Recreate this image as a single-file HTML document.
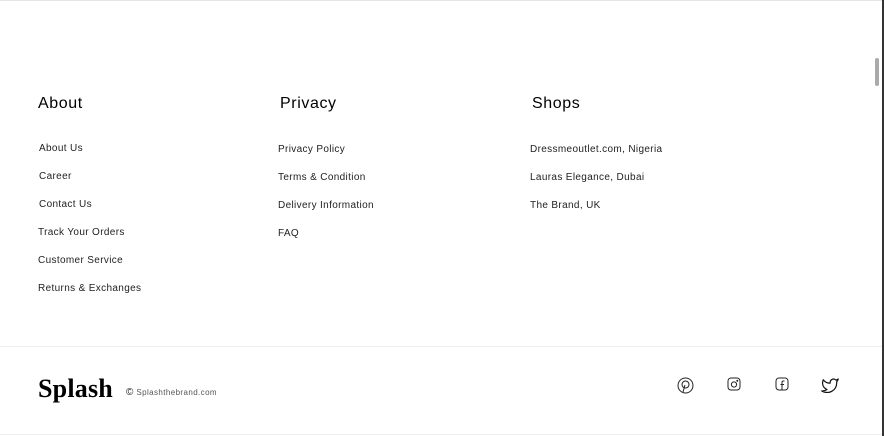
<!DOCTYPE html>
<html><head><meta charset="utf-8"><style>
body{margin:0;width:884px;height:436px;background:#fff;position:relative;overflow:hidden;font-family:"Liberation Sans",sans-serif;color:#111}
.a{position:absolute;white-space:nowrap}
h{position:absolute;font-size:16px;line-height:16px;color:#000;letter-spacing:0.6px}
.l{position:absolute;font-size:10px;line-height:10px;color:#222;letter-spacing:0.35px}
</style></head><body>
<div class="a" style="left:0;top:0;width:882px;height:1px;background:#e6e6e6"></div>
<div class="a" style="left:882px;top:0;width:2px;height:436px;background:#333"></div>
<div class="a" style="left:875px;top:58px;width:4px;height:28px;background:#aaa;border-radius:2px"></div>

<h style="left:38px;top:96px">About</h>
<h style="left:280px;top:96px">Privacy</h>
<h style="left:532px;top:96px">Shops</h>

<div class="l" style="left:39px;top:144px">About Us</div>
<div class="l" style="left:39px;top:172px">Career</div>
<div class="l" style="left:39px;top:200px">Contact Us</div>
<div class="l" style="left:38px;top:228px">Track Your Orders</div>
<div class="l" style="left:38px;top:256px">Customer Service</div>
<div class="l" style="left:38px;top:284px">Returns &amp; Exchanges</div>

<div class="l" style="left:278px;top:145px">Privacy Policy</div>
<div class="l" style="left:278px;top:173px">Terms &amp; Condition</div>
<div class="l" style="left:278px;top:201px">Delivery Information</div>
<div class="l" style="left:278px;top:229px">FAQ</div>

<div class="l" style="left:530px;top:145px">Dressmeoutlet.com, Nigeria</div>
<div class="l" style="left:530px;top:173px">Lauras Elegance, Dubai</div>
<div class="l" style="left:530px;top:201px">The Brand, UK</div>

<div class="a" style="left:0;top:346px;width:882px;height:1px;background:#eee"></div>
<div class="a" style="left:0;top:434px;width:882px;height:1px;background:#eee"></div>

<div class="a" style="left:38px;top:376px;font-family:'Liberation Serif',serif;font-weight:bold;font-size:26px;line-height:26px;letter-spacing:0.2px;color:#000">Splash</div>
<div class="a" style="left:126px;top:388px;font-size:8px;line-height:10px;color:#555;letter-spacing:0.4px"><span style="font-size:10px;color:#222">©</span> Splashthebrand.com</div>

<svg class="a" style="left:677px;top:377px" width="17" height="17" viewBox="0 0 17 17" fill="none" stroke="#222" stroke-width="1"><circle cx="8.5" cy="8.5" r="7.5"/><circle cx="8.5" cy="7.5" r="3.5"/><path d="M8 8 L6 15"/></svg>
<svg class="a" style="left:727px;top:377px" width="15" height="15" viewBox="0 0 15 15" fill="none" stroke="#222" stroke-width="1"><rect x="1" y="1" width="12" height="12" rx="3"/><circle cx="7" cy="7.5" r="2.6"/><circle cx="10.3" cy="3.8" r=".5"/></svg>
<svg class="a" style="left:775px;top:377px" width="15" height="15" viewBox="0 0 15 15" fill="none" stroke="#222" stroke-width="1"><rect x="1" y="1" width="12" height="12" rx="3"/><path d="M9.5 4H8.3C7.5 4 7 4.5 7 5.4V13M5.5 7.5H9"/></svg>
<svg class="a" style="left:821px;top:377px" width="18" height="16" viewBox="0 0 24 20" fill="none" stroke="#111" stroke-width="1.6" stroke-linejoin="round"><path d="M23 2a10 10 0 0 1-3 1.5A4.5 4.5 0 0 0 12.2 6.5v1A10.7 10.7 0 0 1 3 3s-4 9 5 13a11.6 11.6 0 0 1-7 2c9 5 20 0 20-11.5 0-.3 0-.6-.1-.8A7.7 7.7 0 0 0 23 2z"/></svg>
</body></html>
